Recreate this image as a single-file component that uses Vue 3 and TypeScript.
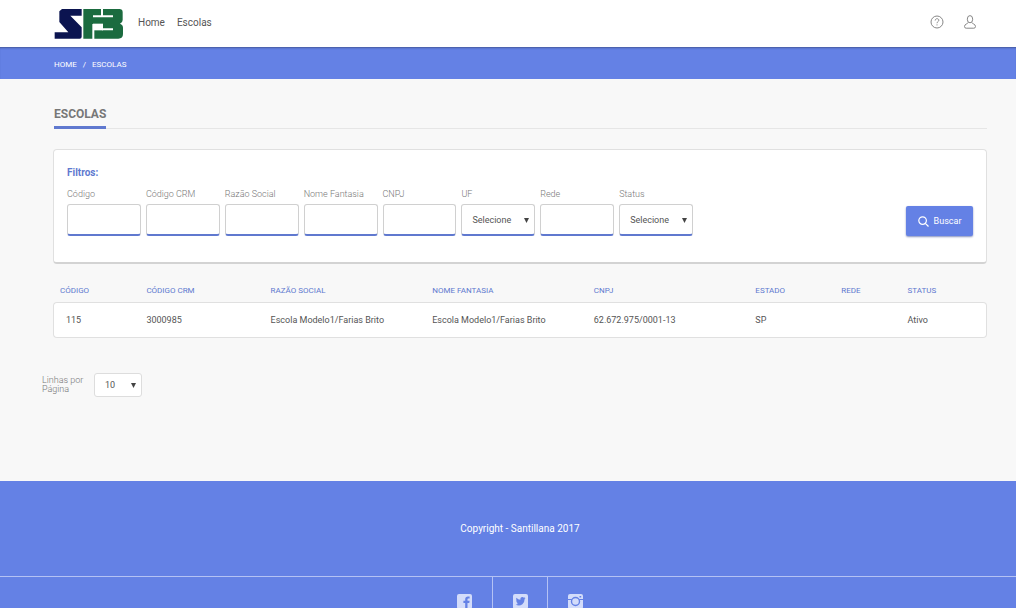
<script setup lang="ts">
import { ref } from 'vue'

interface Field {
  id: string
  label: string
  select?: boolean
}

interface School {
  codigo: string
  crm: string
  razao: string
  fantasia: string
  cnpj: string
  estado: string
  rede: string
  status: string
}

const fields: Field[] = [
  { id: 'codigo', label: 'Código' },
  { id: 'crm', label: 'Código CRM' },
  { id: 'razao', label: 'Razão Social' },
  { id: 'fantasia', label: 'Nome Fantasia' },
  { id: 'cnpj', label: 'CNPJ' },
  { id: 'uf', label: 'UF', select: true },
  { id: 'rede', label: 'Rede' },
  { id: 'status', label: 'Status', select: true },
]

const columns: { key: keyof School; title: string }[] = [
  { key: 'codigo', title: 'CÓDIGO' },
  { key: 'crm', title: 'CÓDIGO CRM' },
  { key: 'razao', title: 'RAZÃO SOCIAL' },
  { key: 'fantasia', title: 'NOME FANTASIA' },
  { key: 'cnpj', title: 'CNPJ' },
  { key: 'estado', title: 'ESTADO' },
  { key: 'rede', title: 'REDE' },
  { key: 'status', title: 'STATUS' },
]

const schools = ref<School[]>([
  {
    codigo: '115',
    crm: '3000985',
    razao: 'Escola Modelo1/Farias Brito',
    fantasia: 'Escola Modelo1/Farias Brito',
    cnpj: '62.672.975/0001-13',
    estado: 'SP',
    rede: '',
    status: 'Ativo',
  },
])
</script>

<template>
  <div class="page">
    <header class="topbar">
      <a href="#" class="logo" aria-label="SFB">
        <svg width="70" height="32" viewBox="0 0 210 96">
          <path fill="#0b1450" d="M24 3H83V23H49L83 58V86Q83 92 77 92H2V73H43L16 42V10Z" />
          <path fill="#1b6b3f" d="M88 3H196Q206 3 206 13V36Q206 44 198 47Q207 50 207 59V78Q207 92 193 92H88Z" />
          <path fill="none" stroke="#fff" stroke-width="6" d="M144 3V25M117 25H177M144 64H177M118 48V93" />
          <path fill="#fff" d="M117 47H147V67H117Z" />
        </svg>
      </a>
      <nav class="menu">
        <a href="#">Home</a>
        <a href="#">Escolas</a>
      </nav>
      <div class="tools">
        <button type="button" aria-label="Ajuda">
          <svg width="14" height="14" viewBox="0 0 14 14" fill="none" stroke="#888">
            <circle cx="7" cy="7" r="6" />
            <path d="M5.2 5.5C5.2 3.1 8.8 3.1 8.8 5.3C8.8 6.7 7 6.6 7 8.2M7 9.4V10.4" />
          </svg>
        </button>
        <button type="button" aria-label="Usuário">
          <svg width="14" height="14" viewBox="0 0 14 14" fill="none" stroke="#888">
            <ellipse cx="7" cy="4.2" rx="2.7" ry="3.6" />
            <path d="M5.2 7.4C5 9 1.5 8.8 1.5 11.5Q1.5 13.2 3.2 13.2H10.8Q12.5 13.2 12.5 11.5C12.5 8.8 9 9 8.8 7.4" />
          </svg>
        </button>
      </div>
    </header>

    <nav class="breadcrumb" aria-label="Localização">
      <a href="#">HOME</a><span>/</span><a href="#">ESCOLAS</a>
    </nav>

    <main class="content">
      <div class="heading"><h1>ESCOLAS</h1></div>

      <form class="filters" @submit.prevent>
        <h2>Filtros:</h2>
        <div class="row">
          <div class="fields">
            <div v-for="f in fields" :key="f.id" class="field">
              <label :for="f.id">{{ f.label }}</label>
              <div v-if="f.select" class="picker">
                <select :id="f.id"><option>Selecione</option></select>
                <svg class="arrow" width="5" height="5" viewBox="0 0 5 5"><path d="M0 0H5L2.5 5Z" /></svg>
              </div>
              <input v-else :id="f.id" type="text" />
            </div>
          </div>
          <button type="submit" class="search">
            <svg width="11" height="11" viewBox="0 0 11 11" fill="none" stroke="#fff" stroke-width="1.2">
              <circle cx="4.6" cy="4.6" r="3.8" />
              <path d="M7.3 7.3L10.5 10.5" />
            </svg>
            Buscar
          </button>
        </div>
      </form>

      <table class="list">
        <thead>
          <tr>
            <th v-for="c in columns" :key="c.key" :class="c.key" scope="col">{{ c.title }}</th>
          </tr>
        </thead>
        <tbody>
          <tr v-for="s in schools" :key="s.codigo">
            <td v-for="c in columns" :key="c.key">{{ s[c.key] }}</td>
          </tr>
        </tbody>
      </table>
    </main>

    <div class="pager">
      <label for="lines">Linhas por Página</label>
      <div class="picker">
        <select id="lines"><option>10</option></select>
        <svg class="arrow" width="5" height="5" viewBox="0 0 5 5"><path d="M0 0H5L2.5 5Z" /></svg>
      </div>
    </div>

    <footer class="footer">
      <p>Copyright - Santillana 2017</p>
      <div class="social">
        <a href="#" aria-label="Facebook">
          <svg width="15" height="15" viewBox="0 0 15 15">
            <rect width="15" height="15" rx="2" fill="#d3dcfa" />
            <path d="M8.2 15V9H6.4V6.8H8.2V5.2C8.2 3.3 9.3 2.4 11 2.4H12.6V4.6H11.5C10.7 4.6 10.5 5 10.5 5.6V6.8H12.6L12.3 9H10.5V15Z" fill="#6481e5" />
          </svg>
        </a>
        <a href="#" aria-label="Twitter">
          <svg width="15" height="15" viewBox="0 0 15 15">
            <rect width="15" height="15" rx="2" fill="#d3dcfa" />
            <path d="M2.6 10.6Q4.3 10.7 5.3 9.8Q3.9 9.6 3.6 8.4H4.5Q3 7.8 3 6.2L3.9 6.4Q2.6 5.2 3.4 3.7Q5.1 5.6 7.4 5.7Q7.1 3.2 9.4 3.1Q10.3 3.1 10.9 3.7L12.2 3.2L11.5 4.4L12.6 4.1L11.6 5.2Q11.6 8.3 9.4 10.2Q6.3 12.6 2.6 10.6Z" fill="#6481e5" />
          </svg>
        </a>
        <a href="#" aria-label="Instagram">
          <svg width="15" height="15" viewBox="0 0 15 15">
            <rect width="15" height="15" rx="2" fill="#d3dcfa" />
            <path d="M0 5.5H15" stroke="#6481e5" />
            <circle cx="7.5" cy="7.5" r="4" fill="#d3dcfa" stroke="#6481e5" stroke-width="1.4" />
            <path d="M11.5 2H13.2V3.5H11.5Z" fill="#6481e5" />
          </svg>
        </a>
      </div>
    </footer>
  </div>
</template>

<style>
body {
  margin: 0;
  background: #f8f8f8;
}
</style>

<style scoped>
.page {
  display: flex;
  flex-direction: column;
  height: 100vh;
  overflow: hidden;
  font-family: Roboto, "Liberation Sans", sans-serif;
  font-size: 9px;
  color: #555;
}
.page * {
  box-sizing: border-box;
}
a {
  color: inherit;
  text-decoration: none;
}
button,
input,
select {
  font: inherit;
  color: inherit;
}
.topbar {
  display: flex;
  flex: none;
  align-items: center;
  height: 47px;
  padding: 0 39px 0 54px;
  background: #fff;
}
.logo {
  display: flex;
}
.menu {
  display: flex;
  gap: 12px;
  margin: 0 auto 2px 14px;
  font-size: 10px;
}
.tools {
  display: flex;
  gap: 19px;
  margin-bottom: 3px;
}
.tools button {
  display: flex;
  padding: 0;
  border: 0;
  background: none;
}
.breadcrumb {
  display: flex;
  flex: none;
  gap: 6px;
  align-items: center;
  height: 32px;
  padding: 3px 54px 0;
  background: #6481e5;
  box-shadow: inset 0 2px 2px -1px #44589c;
  color: #fff;
  font-size: 8px;
}
.content {
  flex: none;
  padding: 28px 29px 0 53px;
}
.heading {
  display: flex;
  margin-left: 1px;
  border-bottom: 1px solid #e6e6e6;
}
h1 {
  margin: 0 0 -1px;
  padding-bottom: 4px;
  border-bottom: 3px solid #6079cf;
  color: #777;
  font-size: 12px;
  font-weight: 700;
  line-height: 15px;
}
.filters {
  height: 115px;
  margin-top: 20px;
  padding: 17px 13px 0;
  border: 1px solid #e0e0e0;
  border-bottom: 2px solid #d3d3d3;
  border-radius: 4px;
  background: #fff;
}
h2 {
  margin: 0 0 10px;
  color: #6079cf;
  font-size: 10px;
  font-weight: 700;
  line-height: 12px;
}
.row {
  display: flex;
  gap: 5px;
  align-items: flex-end;
}
.fields {
  display: grid;
  flex: 0 1 626px;
  grid-template-columns: repeat(8, minmax(0, 1fr));
  gap: 5px;
}
.field label {
  display: block;
  margin-bottom: 5px;
  color: #777;
  font-size: 9px;
  font-weight: 300;
  line-height: 10px;
  white-space: nowrap;
}
.picker {
  display: grid;
  align-items: center;
}
.picker > * {
  grid-area: 1 / 1;
}
.arrow {
  justify-self: end;
  margin-right: 6px;
  fill: #444;
  pointer-events: none;
}
input,
select {
  display: block;
  width: 100%;
  height: 32px;
  padding: 0 10px;
  border: 1px solid #d0d0d0;
  border-bottom: 2px solid #6079cf;
  border-radius: 3px;
  background: #fff;
  appearance: none;
}
.search {
  display: flex;
  gap: 5px;
  align-items: center;
  justify-content: center;
  width: 67px;
  height: 30px;
  margin-left: auto;
  padding: 0;
  border: 0;
  border-radius: 2px;
  background: #6481e5;
  box-shadow: 0 1px 2px #8792bd;
  color: #fff;
}
.list {
  width: 100%;
  margin-top: 20px;
  border-collapse: separate;
  border-spacing: 0;
  table-layout: fixed;
}
th {
  height: 18px;
  padding: 0;
  color: #6079cf;
  font-size: 8px;
  font-weight: 400;
  text-align: left;
  vertical-align: top;
  line-height: 14px;
}
th:first-child {
  padding-left: 7px;
}
td {
  height: 36px;
  padding: 0;
  border: solid #e0e0e0;
  border-width: 1px 0;
  background: #fff;
}
td:first-child {
  padding-left: 12px;
  border-left-width: 1px;
  border-radius: 4px 0 0 4px;
}
td:last-child {
  border-right-width: 1px;
  border-radius: 0 4px 4px 0;
}
.codigo {
  width: 10%;
}
.crm {
  width: 13.3%;
}
.razao,
.fantasia,
.cnpj {
  width: 17.3%;
}
.estado {
  width: 9.2%;
}
.rede {
  width: 7.1%;
}
.pager {
  display: flex;
  flex: none;
  gap: 8px;
  align-items: center;
  margin: 35px 0 0 42px;
}
.pager label {
  width: 44px;
  color: #777;
  font-weight: 300;
  line-height: 9px;
}
.pager .picker {
  width: 48px;
}
.pager select {
  height: 24px;
  border: 1px solid #ddd;
}
.footer {
  flex: 1 0 auto;
  margin-top: 84px;
  background: #6481e5;
  color: #fff;
}
.footer p {
  margin: 0;
  padding: 40px 0 39px 24px;
  font-size: 10px;
  line-height: 16px;
  text-align: center;
}
.social {
  display: flex;
  justify-content: center;
  padding-left: 23px;
  border-top: 1px solid #b4c2f4;
}
.social a {
  display: flex;
  justify-content: center;
  width: 55px;
  padding-top: 17px;
}
.social a + a {
  border-left: 1px solid #b4c2f4;
}
</style>
